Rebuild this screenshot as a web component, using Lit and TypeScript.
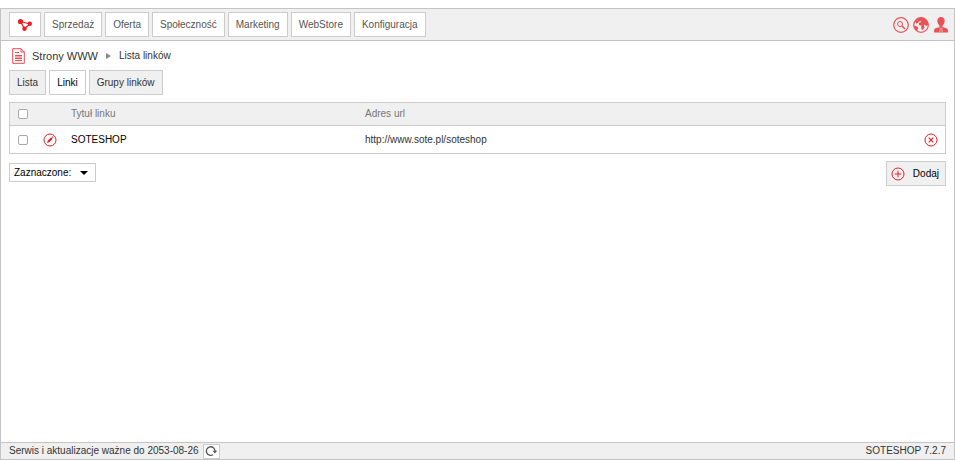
import { LitElement, html, css, svg } from "lit";
import { customElement, state } from "lit/decorators.js";
import { classMap } from "lit/directives/class-map.js";

const icons = {
  molecule: svg`<svg class="icon molecule" viewBox="0 0 16 14" aria-hidden="true">
    <path d="M3.500 3.500 12.800 6 7.500 10.800Z" fill="none" stroke="#ed1c24" stroke-width="1.200"/>
    <circle cx="3.500" cy="3.500" r="2.600" fill="#ed1c24"/><circle cx="12.800" cy="5.800" r="2.200" fill="#ed1c24"/>
    <circle cx="7.500" cy="10.800" r="2.200" fill="#ed1c24"/></svg>`,
  search: svg`<svg class="icon large" viewBox="0 0 16 16" aria-hidden="true" fill="none" stroke="#ea5157">
    <circle cx="8" cy="8" r="7.300" stroke-width="1.200"/><circle cx="7" cy="7" r="2.500"/>
    <path d="m9 9 3 3" stroke-width="1.600"/></svg>`,
  globe: svg`<svg class="icon large" viewBox="0 0 16 16" aria-hidden="true">
    <circle cx="8" cy="8" r="7.300" fill="#f6f0f0" stroke="#ea5157" stroke-width="1.200"/>
    <path d="M2 4.500C3.500 2 5.500.800 8 .700 11 .700 13.500 2.300 14.700 4.800L15.200 8.500 14 8 13.300 9.500 11.800 7.500 10.800 8.500 11.500 10.500 10 12.500 8.800 13 8.200 10.500 8.500 8.500 6.500 8.300 5.500 7 6.500 5.500 8.500 5 7.500 4 6 4.500 5 6 3 6.500ZM1 8.500 3.500 9.200 5.500 11 4.500 12.500 4.600 14 2.300 12.300Z" fill="#ea5157"/></svg>`,
  user: svg`<svg class="icon large" viewBox="0 0 16 16" aria-hidden="true">
    <path d="M8 0C5.500 0 4.200 1.700 4.300 4 4.400 6 5.300 7.300 6.400 8.300V10L2.500 11.200C1.200 11.700 1 12.800 1 15.500H15C15 12.800 14.800 11.700 13.500 11.200L9.600 10V8.300C10.700 7.300 11.600 6 11.700 4 11.800 1.700 10.500 0 8 0Z" fill="#ea5157"/>
    <path d="m6.200 10.500 1.200 1L6.700 15M9.800 10.500l-1.200 1 .7 3.500" fill="none" stroke="#f3c6c8" stroke-width=".8"/></svg>`,
  page: svg`<svg class="icon page" viewBox="0 0 13 16" aria-hidden="true" fill="none" stroke="#ed4a50">
    <path d="M.700.700H9L12.300 4V15.300H.700Z"/><path d="M9 .700V4h3.300M3 4.500h4M3 7.500h7M3 9h7M3 10.500h7M3 12.500h7"/></svg>`,
  edit: svg`<svg class="icon" viewBox="0 0 14 14" aria-hidden="true">
    <circle cx="7" cy="7" r="6" fill="none" stroke="#ed1c24"/>
    <path d="M4 10 4.700 7.800 8.200 4.300 9.700 5.800 6.200 9.300ZM8.700 3.800 9.300 3.300 10.700 4.700 10.200 5.300Z" fill="#ed1c24"/></svg>`,
  remove: svg`<svg class="icon" viewBox="0 0 14 14" aria-hidden="true" fill="none" stroke="#ed1c24">
    <circle cx="7" cy="7" r="6"/><path d="m4.700 4.700 4.600 4.600m0-4.600L4.700 9.300" stroke-width="1.200"/></svg>`,
  add: svg`<svg class="icon" viewBox="0 0 14 14" aria-hidden="true" fill="none" stroke="#ed1c24">
    <circle cx="7" cy="7" r="6"/><path d="M7 3.800v6.400M3.800 7h6.400"/></svg>`,
  refresh: svg`<svg class="icon refresh" viewBox="0 0 12 12" aria-hidden="true">
    <path d="M8 9.700A4.300 4.300 0 1 1 10 6" fill="none" stroke="#555" stroke-width="1.300"/>
    <path d="M7.600 5.700H12.200L9.900 8.600Z" fill="#555"/></svg>`,
};

const menu = ["Sprzedaż", "Oferta", "Społeczność", "Marketing", "WebStore", "Konfiguracja"];
const tabs = ["Lista", "Linki", "Grupy linków"];
const links = [{ title: "SOTESHOP", url: "http://www.sote.pl/soteshop" }];

@customElement("app-root")
export class AppRoot extends LitElement {
  @state() private tab = "Linki";

  static styles = css`
    :host {
      display: flex;
      flex-direction: column;
      box-sizing: border-box;
      min-height: 100vh;
      padding: 8px 0 1px;
      background: #fff;
      font: 10px/14px "Liberation Sans", Arial, sans-serif;
      color: #333;
    }
    * { box-sizing: border-box; }
    button, select, input { font: inherit; color: inherit; margin: 0; border-radius: 0; }
    button { cursor: pointer; padding: 0; }
    .frame { flex: 1; display: flex; flex-direction: column; border: 1px solid #c4c4c4; }
    .bar { display: flex; align-items: center; justify-content: space-between; background: #f0f0f0; padding: 0 8px; }
    .top { height: 32px; border-bottom: 1px solid #c4c4c4; padding-right: 5px; }
    .menu, .tabs { display: flex; gap: 3px; }
    .tools { display: flex; gap: 4px; }
    .box { height: 25px; padding: 0 7px; border: 1px solid #ccc; background: #fff; color: #555; white-space: nowrap; }
    .home { width: 32px; display: grid; place-items: center; }
    .tab { background: #f0f0f0; color: #333; }
    .tab.active { background: #fff; color: #000; }
    .plain { display: grid; place-items: center; border: 0; background: none; }
    .icon { display: block; width: 14px; height: 14px; }
    .icon.large { width: 16px; height: 16px; }
    .icon.molecule { width: 16px; }
    .icon.page { width: 13px; height: 16px; }
    .icon.refresh { width: 12px; height: 12px; }
    main { flex: 1; padding: 8px; }
    .crumbs { display: flex; align-items: center; height: 14px; margin-bottom: 7px; padding-left: 3px; }
    h1 { margin: 0 8px 0 7px; font-size: 11px; font-weight: 400; }
    .arrow { border: 3px solid transparent; border-left: 5px solid #888; border-right: 0; margin-right: 8px; }
    .list { width: 100%; margin: 7px 0; border: 1px solid #ccc; border-spacing: 0; table-layout: fixed; }
    th, td { padding: 0 7px; text-align: left; font-weight: 400; }
    th { height: 23px; background: #f0f0f0; color: #777; border-bottom: 1px solid #ccc; }
    td { height: 27px; }
    .narrow { width: 27px; padding: 0 2px 0 0; }
    .narrow > * { margin: 0 auto; }
    .title { width: 294px; }
    .name { color: #000; }
    input { display: block; appearance: none; width: 10px; height: 10px; border: 1px solid #aaa; border-radius: 2px; background: #fff; }
    input:checked { background: #ed1c24; }
    .actions { display: flex; align-items: flex-start; justify-content: space-between; }
    .pick { position: relative; display: flex; margin-top: 2px; }
    .pick::after { content: ""; position: absolute; right: 8px; top: 8px; border: 4px solid transparent; border-top-color: #000; border-bottom: 0; pointer-events: none; }
    select { appearance: none; width: 87px; height: 19px; padding: 0 4px; border: 1px solid #ccc; background: #fff; color: #000; }
    .add { display: flex; align-items: center; gap: 8px; padding: 0 6px 0 4px; background: #f0f0f0; color: #000; }
    footer { height: 17px; border-top: 1px solid #c4c4c4; }
    .service { display: flex; align-items: center; gap: 4px; }
    .reload { width: 17px; height: 15px; border: 1px solid #ccc; background: #fff; display: grid; place-items: center; }
  `;

  render() {
    return html`
      <div class="frame">
        <header class="bar top">
          <nav class="menu">
            <button class="box home" aria-label="Start">${icons.molecule}</button>
            ${menu.map((m) => html`<button class="box">${m}</button>`)}
          </nav>
          <div class="tools">
            <button class="plain" aria-label="Szukaj">${icons.search}</button>
            <button class="plain" aria-label="Język">${icons.globe}</button>
            <button class="plain" aria-label="Konto">${icons.user}</button>
          </div>
        </header>
        <main>
          <div class="crumbs">
            ${icons.page}
            <h1>Strony WWW</h1>
            <span class="arrow"></span>
            <span>Lista linków</span>
          </div>
          <nav class="tabs">
            ${tabs.map((t) => html`<button
              class=${classMap({ box: true, tab: true, active: t === this.tab })}
              @click=${() => (this.tab = t)}>${t}</button>`)}
          </nav>
          <table class="list">
            <thead>
              <tr>
                <th class="narrow"><input type="checkbox" aria-label="Zaznacz wszystkie"></th>
                <th class="narrow"></th>
                <th class="title">Tytuł linku</th>
                <th>Adres url</th>
                <th class="narrow"></th>
              </tr>
            </thead>
            <tbody>
              ${links.map((l) => html`<tr>
                <td class="narrow"><input type="checkbox" aria-label=${l.title}></td>
                <td class="narrow"><button class="plain" aria-label="Edytuj">${icons.edit}</button></td>
                <td class="name">${l.title}</td>
                <td>${l.url}</td>
                <td class="narrow"><button class="plain" aria-label="Usuń">${icons.remove}</button></td>
              </tr>`)}
            </tbody>
          </table>
          <div class="actions">
            <div class="pick">
              <select aria-label="Zaznaczone"><option>Zaznaczone:</option></select>
            </div>
            <button class="box add">${icons.add}<span>Dodaj</span></button>
          </div>
        </main>
        <footer class="bar">
          <div class="service">
            <span>Serwis i aktualizacje ważne do 2053-08-26</span>
            <button class="reload" aria-label="Odśwież">${icons.refresh}</button>
          </div>
          <span>SOTESHOP 7.2.7</span>
        </footer>
      </div>
    `;
  }
}
